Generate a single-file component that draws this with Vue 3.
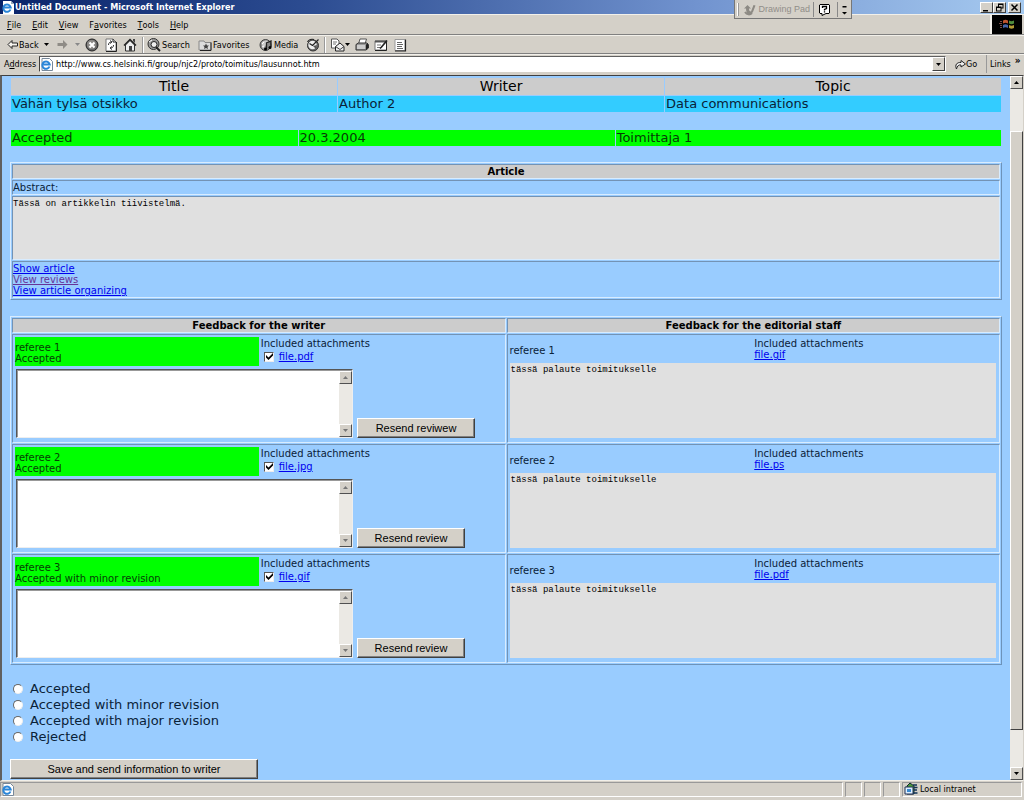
<script setup>
import { ref } from 'vue'

const menus = ['File', 'Edit', 'View', 'Favorites', 'Tools', 'Help']
const accessKeys = { Favorites: 1 }
const address = ref('http://www.cs.helsinki.fi/group/njc2/proto/toimitus/lausunnot.htm')
const reviews = ref([
  { id: 1, status: 'Accepted', file: 'file.pdf', staffFile: 'file.gif', action: 'Resend reviwew', wide: true, sent: true, text: '' },
  { id: 2, status: 'Accepted', file: 'file.jpg', staffFile: 'file.ps', action: 'Resend review', wide: false, sent: true, text: '' },
  { id: 3, status: 'Accepted with minor revision', file: 'file.gif', staffFile: 'file.pdf', action: 'Resend review', wide: false, sent: true, text: '' },
])
const decisions = ['Accepted', 'Accepted with minor revision', 'Accepted with major revision', 'Rejected']
const decision = ref('')
</script>

<template>
  <div class="window">
    <header class="titlebar">
      <svg class="ie" viewBox="0 0 13 13"><path d="M2 0h8l3 3v10H2z" fill="#fff" /><path d="M10 0v3h3" fill="#9ab" /><path d="M9.500 8.500A3.700 3.700 0 1 1 9.700 6.500H3.500" fill="none" stroke="#2a86d8" stroke-width="2" /></svg>
      <h1>Untitled Document - Microsoft Internet Explorer</h1>
      <div class="winbtns">
        <button aria-label="Minimize"><svg viewBox="0 0 9 9"><path d="M1 7h5v1.500H1z" /></svg></button>
        <button aria-label="Restore"><svg viewBox="0 0 9 9"><path d="M3 0.500h5.500v5H6.500V8.500H1V3.500h2zM4 2v1.500h2.500V4.500h1V2zM2 5v2.500h3.500V5z" fill-rule="evenodd" /></svg></button>
        <button class="close" aria-label="Close"><svg viewBox="0 0 9 9"><path d="M1.500 1.500l6 6M7.500 1.500l-6 6" stroke="#000" stroke-width="1.500" /></svg></button>
      </div>
      <div class="pad">
        <span class="grip"></span>
        <button class="padname" disabled>
          <svg viewBox="0 0 13 13"><path d="M1 5.500L4.500 2 8 5.500H6c0 2 .5 3 2 3L10.500 2l2 .5L10 9c-3 4-7 3-7-3.500z" fill="#8d8a84" /><path d="M2 9c2 3 5 3 7 1" fill="none" stroke="#8d8a84" stroke-width="2" /></svg>
          Drawing Pad
        </button>
        <span class="padsep"></span>
        <button aria-label="Help"><svg class="q" viewBox="0 0 13 13"><path d="M2 1.500h9l.5.5v8l-.5.5H8L4 12.500v-2H2l-.5-.5V2z" fill="#fff" stroke="#000" /><path d="M4.500 5V3.500h4V5.500L6.500 6.500v1M6.500 8.300v1.200" fill="none" stroke="#000" stroke-width="1.300" /></svg></button>
        <span class="padsep"></span>
        <button aria-label="Options"><svg class="opt" viewBox="0 0 7 13"><path d="M1.500 3h4v1.500h-4zM1 9h5L3.500 11.500z" /></svg></button>
      </div>
    </header>

    <nav class="menubar">
      <button v-for="m in menus" :key="m">{{ m.slice(0, accessKeys[m] || 0) }}<u>{{ m[accessKeys[m] || 0] }}</u>{{ m.slice((accessKeys[m] || 0) + 1) }}</button>
      <span class="throbber">
        <svg viewBox="0 0 30 18"><path d="M11 5c2-1 3-1 5 0v3c-2-1-3-1-5 0z" fill="#c0552e" /><path d="M17 5c2 1 3 1 5 0v3c-2 1-3 1-5 0z" fill="#4f8d3d" /><path d="M11 9.500c2-1 3-1 5 0v3c-2-1-3-1-5 0z" fill="#4664a8" /><path d="M17 9.500c2 1 3 1 5 0v3c-2 1-3 1-5 0z" fill="#b39b35" /><path d="M8 6h2M7 8h3M8 10h2M8 12h2" stroke="#7b4b45" /></svg>
      </span>
    </nav>

    <div class="toolbar">
      <button class="back"><svg class="w11" viewBox="0 0 11 11"><path d="M5 1.500L1 5.500l4 4V7h5.500V4H5z" fill="#f6f4ef" stroke="#222" /></svg>Back</button>
      <svg class="caret" viewBox="0 0 5 3"><path d="M0 0h5L2.500 3z" /></svg>
      <button class="fwd" aria-label="Forward"><svg class="w11" viewBox="0 0 11 11"><path d="M6 1l4.500 4.500L6 10V7H0.500V4H6z" fill="#8f8c86" /></svg></button>
      <svg class="caret" viewBox="0 0 5 3"><path d="M0 0h5L2.500 3z" fill="#888" /></svg>
      <button class="ic stop" aria-label="Stop"><svg viewBox="0 0 14 14"><circle cx="7" cy="7" r="6" fill="#666" stroke="#222" /><circle cx="6.500" cy="6.500" r="4.500" fill="#8d8b88" /><path d="M4.500 4.500l5 5M9.500 4.500l-5 5" stroke="#fff" stroke-width="2" /></svg></button>
      <button class="ic" aria-label="Refresh"><svg viewBox="0 0 14 14"><path d="M2 1h7l3 3v9H2z" fill="#fff" stroke="#777" /><path d="M9 1v3h3M12.500 4v9.500H2" fill="none" stroke="#222" /><path d="M4.500 7c0-2 1-3 3-3M6 2.500L8 4 6 5.500M9.500 7c0 2-1 3-3 3M8 8.500L6 10l2 1.500" fill="none" stroke="#333" /></svg></button>
      <button class="ic" aria-label="Home"><svg viewBox="0 0 14 14"><path d="M2.500 7v6h9V7L7 2.500z" fill="#eee" stroke="#333" /><path d="M1 7.500L7 1.500l6 6" fill="none" stroke="#222" stroke-width="1.500" /><path d="M10 1h2v4l-2-2zM6 8h3v5H6z" fill="#444" /></svg></button>
      <span class="sep"></span>
      <button class="search"><svg class="w14" viewBox="0 0 14 14"><circle cx="6.500" cy="6" r="5.500" fill="#999" stroke="#333" /><circle cx="7" cy="6.500" r="3" fill="#eee" stroke="#222" /><path d="M9 9l4 4" stroke="#222" stroke-width="2" /><path d="M2 4l3-2" stroke="#fff" /></svg>Search</button>
      <button class="favs"><svg class="w14" viewBox="0 0 14 14"><path d="M1 3h5l1 1.500h6V12H1z" fill="#ddd" stroke="#888" /><path d="M13 4.500V12.500H2" fill="none" stroke="#222" /><path d="M8 5.500l1 2h2L9.500 9l.5 2-2-1-2 1 .5-2L5 7.500h2z" fill="#444" /></svg>Favorites</button>
      <button class="media"><svg class="w14" viewBox="0 0 14 14"><circle cx="6.500" cy="7" r="5.500" fill="#888" stroke="#444" /><path d="M2.500 5c2-3 6-3 7-1L7 7l-3 4z" fill="#ccc" /><path d="M7.500 11V5l4.500-2v6" fill="none" stroke="#222" stroke-width="1.300" /><circle cx="6.500" cy="11" r="1.500" /><circle cx="11" cy="9.500" r="1.500" /><path d="M3 6l2-2M3 9l2-1" stroke="#fff" /></svg>Media</button>
      <button class="ic hist" aria-label="History"><svg viewBox="0 0 14 14"><circle cx="7" cy="7.500" r="5.500" fill="#666" stroke="#333" /><circle cx="6.500" cy="7" r="4.200" fill="#eee" /><path d="M6.500 7.500L12.500 1.500M3.500 5.500l3 2M1.500 4C3 1.500 6 1 8 1.500" fill="none" stroke="#222" stroke-width="1.200" /><path d="M7 8l4-1-1 4z" fill="#555" /></svg></button>
      <span class="sep"></span>
      <button class="ic mail" aria-label="Mail"><svg viewBox="0 0 15 14"><path d="M1.500 1h5.500l2 2v7H1.500z" fill="#fff" stroke="#555" /><path d="M3 4h4M3 6h3" stroke="#777" /><path d="M5.500 8.500L10 5l4 3.500V13H5.500z" fill="#eee" stroke="#222" /><path d="M5.500 8.500L10 11.500l4-3" fill="none" stroke="#444" /></svg></button>
      <svg class="caret" viewBox="0 0 5 3"><path d="M0 0h5L2.500 3z" /></svg>
      <button class="ic print" aria-label="Print"><svg viewBox="0 0 14 14"><path d="M5 1h6.500L10 6H3.500z" fill="#fff" stroke="#555" /><path d="M1 6.500L3.500 5H12l1.500 1.500V10L11 12H1z" fill="#999" stroke="#333" /><path d="M2 8h8M2 10h8" stroke="#fff" /><path d="M11 6.500l2-1V10l-2 2z" fill="#222" /></svg></button>
      <button class="ic" aria-label="Edit"><svg viewBox="0 0 14 14"><path d="M1 3h11.500v9H1z" fill="#fff" stroke="#777" /><path d="M1 3.500h11.500" stroke="#555" stroke-width="2" /><path d="M12.500 4v8.500H1" fill="none" stroke="#222" /><path d="M3 7h4M3 9.500h3" stroke="#777" /><path d="M13 2.500L7.500 9 6 10.500" stroke="#222" stroke-width="1.700" /></svg></button>
      <button class="ic" aria-label="Discuss"><svg viewBox="0 0 14 14"><path d="M2 1.500h10v11H2z" fill="#fff" stroke="#999" /><path d="M12.500 1.500v11.500H2" fill="none" stroke="#222" stroke-width="1.200" /><path d="M4 4.500h5M4 6.500h6M4 8.500h5M4 10.500h6" stroke="#666" /></svg></button>
    </div>

    <div class="addressbar">
      <label for="addr">A<u>d</u>dress</label>
      <div class="combo">
        <svg class="ie" viewBox="0 0 13 13"><path d="M2 .5h7.500l3 3v9H2z" fill="#fff" stroke="#789" /><path d="M9.500 8.500A3.700 3.700 0 1 1 9.700 6.500H3.500" fill="none" stroke="#2a86d8" stroke-width="2" /></svg>
        <input id="addr" v-model="address" type="text" />
        <button class="drop" aria-label="Show addresses"><svg class="caret" viewBox="0 0 5 3"><path d="M0 0h5L2.500 3z" /></svg></button>
      </div>
      <button class="go"><svg class="w11" viewBox="0 0 11 11"><path d="M1.500 10C-.5 6 2 3 6 3.500V1.500l4.500 3.500L6 8V6C4 5.500 2 7 1.500 10z" fill="#eee" stroke="#222" /></svg>Go</button>
      <button class="links">Links <b>»</b></button>
    </div>

    <div class="viewport">
      <main class="page">
        <table class="info">
          <thead><tr><th class="third">Title</th><th class="third">Writer</th><th>Topic</th></tr></thead>
          <tbody><tr><td>Vähän tylsä otsikko</td><td>Author 2</td><td>Data communications</td></tr></tbody>
        </table>

        <table class="info state">
          <tbody><tr><td class="c1">Accepted</td><td class="c2">20.3.2004</td><td>Toimittaja 1</td></tr></tbody>
        </table>

        <table class="framed article">
          <thead><tr><th>Article</th></tr></thead>
          <tbody>
            <tr><td>Abstract:</td></tr>
            <tr><td class="abstract">Tässä on artikkelin tiivistelmä.</td></tr>
            <tr><td class="linkcell">
              <a href="#article">Show article</a>
              <a href="#reviews" class="visited">View reviews</a>
              <a href="#organizing">View article organizing</a>
            </td></tr>
          </tbody>
        </table>

        <table class="framed feedback">
          <thead><tr><th>Feedback for the writer</th><th>Feedback for the editorial staff</th></tr></thead>
          <tbody>
            <tr v-for="r in reviews" :key="r.id">
              <td>
                <div class="split">
                  <div class="verdict"><label :for="'text' + r.id">referee {{ r.id }}</label><span>{{ r.status }}</span></div>
                  <div class="attach">
                    <span>Included attachments</span>
                    <div class="checkline">
                      <span class="check">
                        <input v-model="r.sent" type="checkbox" :aria-label="'Include ' + r.file" />
                        <svg v-if="r.sent" viewBox="0 0 7 7"><path d="M0 2l2.500 2.500L7 0v2.500L2.500 7 0 4.500z" /></svg>
                      </span>
                      <a href="#file">{{ r.file }}</a>
                    </div>
                  </div>
                </div>
                <div class="reply">
                  <div class="field">
                    <textarea :id="'text' + r.id" v-model="r.text"></textarea>
                    <div class="bar">
                      <span class="arrow"><svg class="caret" viewBox="0 0 5 3"><path d="M0 3h5L2.500 0z" fill="#777" /></svg></span>
                      <span class="arrow"><svg class="caret" viewBox="0 0 5 3"><path d="M0 0h5L2.500 3z" fill="#777" /></svg></span>
                    </div>
                  </div>
                  <button class="push" :class="{ wide: r.wide }">{{ r.action }}</button>
                </div>
              </td>
              <td>
                <div class="split staff">
                  <span class="who">referee {{ r.id }}</span>
                  <div class="attach"><span>Included attachments</span><a href="#file">{{ r.staffFile }}</a></div>
                </div>
                <div class="note">tässä palaute toimitukselle</div>
              </td>
            </tr>
          </tbody>
        </table>

        <div class="decisions">
          <label v-for="d in decisions" :key="d"><input v-model="decision" type="radio" name="decision" :value="d" />{{ d }}</label>
        </div>
        <button class="push save">Save and send information to writer</button>
      </main>
      <div class="scroll">
        <span class="arrow"><svg class="caret" viewBox="0 0 5 3"><path d="M0 3h5L2.500 0z" /></svg></span>
        <div class="track"><div class="thumb"></div></div>
        <span class="arrow"><svg class="caret" viewBox="0 0 5 3"><path d="M0 0h5L2.500 3z" /></svg></span>
      </div>
    </div>

    <footer class="status">
      <div class="pane grow"><svg class="ie" viewBox="0 0 13 13"><path d="M2 .5h7.500l3 3v9H2z" fill="#fff" stroke="#789" /><path d="M9.500 8.500A3.700 3.700 0 1 1 9.700 6.500H3.500" fill="none" stroke="#2a86d8" stroke-width="2" /></svg></div>
      <div class="pane"></div><div class="pane"></div><div class="pane"></div>
      <div class="pane zone"><svg class="w14" viewBox="0 0 14 14"><path d="M3 4l3-3 4 3v8H3z" fill="#4a9a3a" stroke="#123" /><path d="M1 5h8v7H1z" fill="#dfefff" stroke="#235" /><path d="M3 7h4v3H3z" fill="#3a8ad0" /><path d="M9 3h4M10 5.500h3.500M10 8h3M9 11h4.500" stroke="#135" stroke-width="1.300" /></svg>Local intranet</div>
    </footer>
  </div>
</template>

<style>
html, body { margin: 0; background: #d4d0c8; }
</style>

<style scoped>
.window {
  height: 100vh;
  display: flex;
  flex-direction: column;
  background: #d4d0c8;
  color: #000;
  font: 9px/12px "DejaVu Sans Condensed", "DejaVu Sans", sans-serif;
  overflow: hidden;
}
button { font: inherit; color: inherit; background: none; border: 0; padding: 0; margin: 0; display: flex; align-items: center; white-space: nowrap; }
svg { display: block; flex: none; }
.ie { width: 13px; height: 13px; }
.w11 { width: 11px; height: 11px; }
.w14 { width: 14px; height: 14px; }
.caret { width: 5px; height: 3px; }

.titlebar { position: relative; flex: none; height: 14px; display: flex; align-items: center; background: linear-gradient(90deg, #0a246a, #2c4c91 30%, #7193cf 68%, #a6caf0); color: #fff; padding: 0 3px 0 1px; }
.titlebar h1 { margin: 0; flex: 1; font-size: 9px; line-height: 14px; font-weight: 700; padding-left: 1px; }
.winbtns { display: flex; }
.winbtns button { width: 13px; height: 11px; background: #d4d0c8; border: 1px solid; border-color: #fff #404040 #404040 #fff; justify-content: center; box-sizing: border-box; }
.winbtns svg { width: 9px; height: 9px; }
.winbtns .close { margin-left: 2px; }
.pad { position: absolute; top: 0; right: 172px; height: 18px; display: flex; align-items: center; background: #d4d0c8; border: 1px solid #777; border-top: 0; color: #918e88; font: 9px/12px "Liberation Sans", Arial, sans-serif; z-index: 2; }
.grip { width: 2px; height: 13px; margin: 0 4px 0 2px; border-left: 1px solid #fff; border-right: 1px solid #999; box-sizing: border-box; }
.padname { gap: 2px; }
.pad .padname { color: #918e88; }
.pad svg { width: 13px; height: 13px; }
.pad .opt { width: 7px; margin: 0 3px; }
.pad .q { margin: 0 3px 0 4px; }
.padsep { width: 1px; height: 15px; background: #888; margin-left: 3px; }

.menubar { flex: none; height: 19px; border-top: 1px solid #f2f0ea; border-bottom: 1px solid #808080; display: flex; align-items: center; padding-left: 7px; gap: 11px; }
.throbber { align-self: stretch; margin-left: auto; width: 30px; background: #000; border-left: 2px solid #f2f0ea; margin-right: 2px; }
.throbber svg { width: 30px; height: 19px; }

.toolbar { flex: none; height: 17px; border-top: 1px solid #f2f0ea; border-bottom: 1px solid #808080; display: flex; align-items: center; padding-left: 7px; }
.toolbar button { gap: 1px; }
.back { width: 37px; }
.toolbar .fwd { margin-left: 8px; width: 18px; }
.ic svg { width: 14px; height: 14px; }
.ic { margin-right: 5px; }
.stop { margin-left: 5px; }
.sep { width: 1px; height: 16px; background: #999; border-right: 1px solid #fff; }
.search { width: 51px; margin-left: 3px; }
.favs { width: 61px; }
.media { width: 47px; }
.toolbar .hist { margin-right: 4px; }
.mail { margin-left: 4px; }
.toolbar .mail { margin-right: 0; }
.toolbar .mail svg { width: 15px; }
.print { margin-left: 5px; }

.addressbar { flex: none; height: 18px; border-top: 1px solid #f2f0ea; display: flex; align-items: center; padding: 0 0 2px 4px; }
.addressbar label { width: 35px; }
.combo { flex: 1; height: 16px; box-sizing: border-box; display: flex; align-items: center; background: #fff; border: 1px solid; border-color: #606060 #fff #fff #404040; }
.combo input { flex: 1; min-width: 0; border: 0; padding: 0; margin: 0 0 0 3px; background: none; outline: 0; color: #000; font: inherit; height: 14px; }
.drop { width: 13px; height: 14px; background: #d4d0c8; border: 1px solid; border-color: #fff #404040 #404040 #fff; justify-content: center; box-sizing: border-box; }
.go { margin-left: 9px; width: 31px; }
.go, .links { align-self: stretch; }
.links { border-left: 1px solid #999; padding-left: 3px; width: 38px; box-sizing: border-box; gap: 4px; }
.links b { font-size: 10px; line-height: 8px; padding-bottom: 6px; }

.viewport { flex: 1; min-height: 0; display: flex; border: solid; border-width: 1px 1px 1px 2px; border-color: #404040 #d4d0c8 #f2f0ea #606060; }
.page { flex: 1; min-width: 0; box-sizing: border-box; overflow: hidden; background: #99ccff; padding: 1px 8px 0 8px; color: #0a2238; font: 13px/16px "DejaVu Sans", Verdana, sans-serif; }
table { width: 100%; }
th, td { padding: 0; text-align: left; box-sizing: border-box; }
.info { table-layout: fixed; border-spacing: 1px; }
.info td { background: #33ccff; padding: 0 1px; }
.info th { background: #ccc; color: #000; font-weight: 400; font-size: 14px; line-height: 17px; text-align: center; }
.third { width: 33%; }
.state { margin-top: 16px; }
.info.state td { background: #00ff00; color: #063c06; }
.c1 { width: 29%; }
.c2 { width: 32%; }
.framed { border: 1px solid; border-color: #d8ecff #6d93ba #6d93ba #d8ecff; border-spacing: 1px; font-size: 10px; line-height: 12px; }
.framed > thead th, .framed > tbody > tr > td { border: 1px solid; border-color: #7393b5 #d8ecff #d8ecff #7393b5; }
.framed th { background: #ccc; color: #000; text-align: center; font-size: 10px; line-height: 13px; }
.article { margin-top: 15px; }
.article td { line-height: 13px; }
.framed .abstract, .note { background: #e0e0e0; color: #000; font: 9px/12px "Liberation Mono", "Courier New", monospace; }
.framed .abstract { height: 64px; vertical-align: top; padding-top: 1px; }
.linkcell a { display: block; width: max-content; line-height: 11px; }
.framed .linkcell { padding: 1px 0; }
a { color: #0000ee; }
.visited { color: #663399; }

.feedback { margin-top: 16px; table-layout: fixed; }
.feedback > tbody > tr > td { height: 109px; padding: 2px; vertical-align: top; }
.split { display: grid; grid-template-columns: 1fr 1fr; height: 29px; line-height: 11px; }
.verdict { background: #00ff00; color: #063c06; display: flex; flex-direction: column; justify-content: center; padding: 3px 0 0; }
.attach { padding-left: 2px; display: flex; flex-direction: column; align-items: flex-start; padding-top: 1px; }
.checkline { display: flex; align-items: center; gap: 5px; padding-left: 3px; margin-top: 2px; }
.check { position: relative; width: 10px; height: 10px; }
.check input { appearance: none; box-sizing: border-box; display: block; width: 10px; height: 10px; margin: 0; background: #fff; border: 1px solid; border-color: #555 #eee #eee #555; }
.check svg { position: absolute; left: 2px; top: 1px; width: 7px; height: 7px; pointer-events: none; }
.reply { display: flex; align-items: flex-end; gap: 4px; padding: 3px 1px 0; }
.field { display: flex; width: 337px; height: 69px; box-sizing: border-box; background: #fff; border: 1px solid; border-color: #555 #eee #eee #555; box-shadow: inset 1px 1px 0 #999; }
.field textarea { flex: 1; min-width: 0; border: 0; padding: 2px; margin: 0; background: none; resize: none; outline: 0; overflow: hidden; font: 9px/12px "Liberation Mono", monospace; }
.bar { width: 13px; display: flex; flex-direction: column; justify-content: space-between; background: #ebe9e4; margin-top: 1px; }
.arrow { display: flex; align-items: center; justify-content: center; box-sizing: border-box; width: 13px; height: 13px; background: #d4d0c8; border: 1px solid; border-color: #fff #505050 #505050 #fff; }
.push { box-sizing: border-box; width: 108px; height: 20px; justify-content: center; background: #d4d0c8; color: #000; border: 1px solid; border-color: #fff #404040 #404040 #fff; box-shadow: inset -1px -1px 0 #808080; font: 11px/14px "Liberation Sans", Arial, sans-serif; }
.wide { width: 118px; }
.staff { height: 26px; }
.staff .who { padding: 8px 0 0; }
.staff .attach { padding-left: 1px; }
.note { height: 73px; padding: 1px; margin-right: 1px; }

.decisions { margin-top: 16px; display: flex; flex-direction: column; align-items: flex-start; }
.decisions label { display: flex; align-items: center; gap: 7px; padding-left: 3px; }
.decisions input { appearance: none; box-sizing: border-box; width: 10px; height: 10px; margin: 0; border-radius: 50%; background: #fff; border: 1px solid; border-color: #666 #eee #eee #666; }
.save { width: 248px; margin-top: 14px; }

.scroll { width: 13px; display: flex; flex-direction: column; background: #ebe9e4; }
.track { flex: 1; display: flex; flex-direction: column; padding: 42px 0 37px; }
.thumb { flex: 1; background: #d4d0c8; border: 1px solid; border-color: #fff #404040 #404040 #fff; }

.status { flex: none; height: 19px; display: flex; align-items: center; gap: 2px; padding: 0 2px 3px 0; box-sizing: border-box; }
.pane { box-sizing: border-box; height: 15px; width: 17px; border: 1px solid; border-color: #999 #fff #fff #999; display: flex; align-items: center; }
.grow { flex: 1; }
.zone { width: 120px; gap: 2px; padding-left: 1px; }
</style>
